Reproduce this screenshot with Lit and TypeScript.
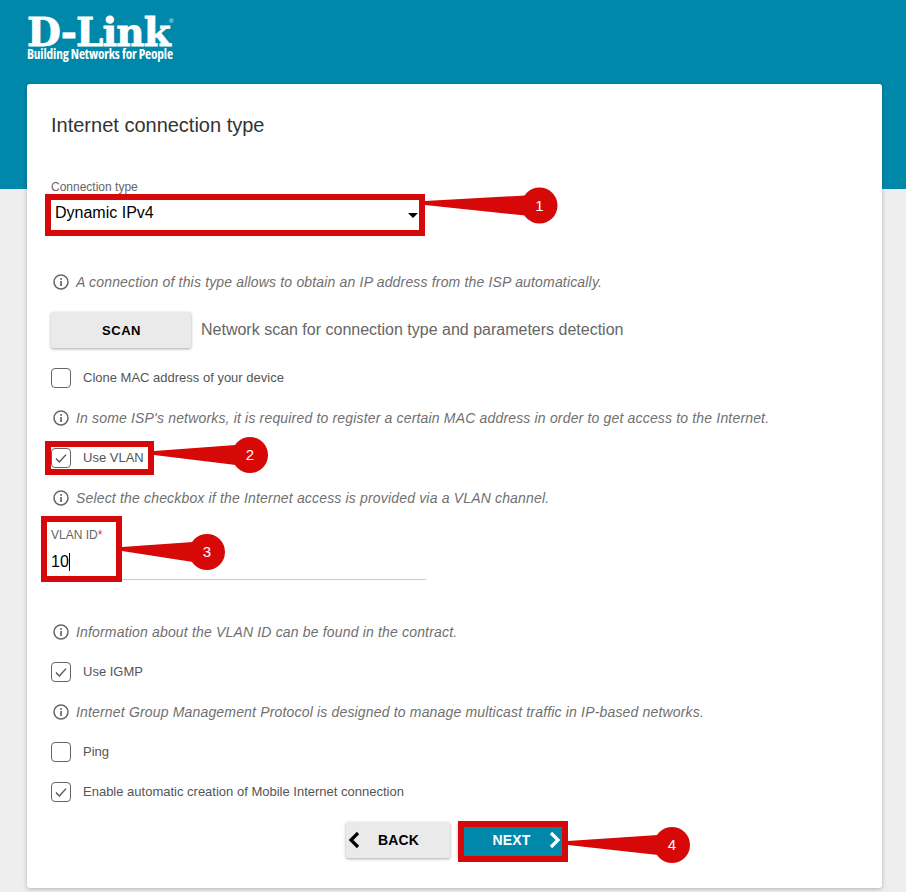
import { LitElement, html, css, svg } from "lit";
import { customElement } from "lit/decorators.js";

const info = html`<svg class="info" viewBox="0 0 16 16" width="16" height="16"><circle cx="8" cy="8" r="7" fill="none" stroke="#666" stroke-width="1.5"/><rect x="7.2" y="7" width="1.7" height="5" fill="#666"/><rect x="7.2" y="4" width="1.7" height="1.8" fill="#666"/></svg>`;

const hint = (t: string, cls = "") => html`<div class="hint ${cls}">${info}<span>${t}</span></div>`;
const check = (t: string, on: boolean, cls = "") => html`<div class="check ${cls}"><span class="box">${on ? html`<svg viewBox="0 0 20 20" width="20" height="20"><path d="M5 10.5l3.4 3.4L15 6.6" fill="none" stroke="#555" stroke-width="1.4"/></svg>` : ""}</span><span class="lbl">${t}</span></div>`;

const callouts: [number, number, number, number, number, number, string, number, number][] = [
  [48, 197, 374, 36, 425, 203, "1", 539.5, 205.5],
  [48, 444, 103, 28, 154, 453, "2", 250, 455],
  [44, 519, 75, 60, 122, 549, "3", 207, 552],
  [461, 824, 104, 35, 568, 843, "4", 672, 845],
];

@customElement("app-root")
export class AppRoot extends LitElement {
  static styles = css`
    :host {
      display: block;
      position: relative;
      width: 906px;
      height: 892px;
      overflow: hidden;
      background: linear-gradient(#0088ab 0 189px, #eeeeee 189px);
      font-family: "Liberation Sans", Arial, sans-serif;
    }
    .logo { height: 84px; box-sizing: border-box; padding: 17px 0 0 27px; color: #fff; }
    .brand { display: flex; align-items: flex-start; font-family: "DejaVu Serif", serif; font-weight: 700; font-size: 39px; line-height: 31px; letter-spacing: -0.9px; height: 31px; -webkit-text-stroke: 0.8px #fff; }
    .reg { font-family: "Liberation Sans", sans-serif; font-size: 6px; line-height: 8px; font-weight: 400; letter-spacing: 0; margin: 0 0 0 -1px; -webkit-text-stroke: 0; }
    .tag { font-family: "Open Sans", sans-serif; font-stretch: condensed; font-weight: 700; font-size: 13.3px; line-height: 13px; letter-spacing: -0.15px; white-space: nowrap; }
    .card {
      box-sizing: border-box;
      width: 855px;
      height: 804px;
      margin-left: 27px;
      padding: 0 24px;
      background: #fff;
      border-radius: 3px;
      box-shadow: 0 1px 4px rgba(0, 0, 0, 0.25);
    }
    h1 { margin: 0; padding-top: 29px; font-size: 20px; line-height: 24px; font-weight: 400; color: #333; height: 67px; }
    .flabel { font-size: 12px; line-height: 14px; color: #666; }
    .select { box-sizing: border-box; display: flex; justify-content: space-between; align-items: center; height: 38px; width: 367px; padding-left: 4px; font-size: 16px; color: #000; }
    .caret { width: 0; height: 0; border-left: 5px solid transparent; border-right: 5px solid transparent; border-top: 5px solid #000; margin-top: 4px; }
    .hint { display: flex; align-items: center; gap: 7px; height: 20px; padding-left: 2px; font-size: 14px; font-style: italic; color: #707070; letter-spacing: 0.17px; }
    .info { flex: none; }
    .mt-a { margin-top: 40px; }
    .mt-b { margin-top: 42px; }
    .scan { display: flex; align-items: center; gap: 10px; margin-top: 20px; font-size: 16px; color: #666; }
    .btn {
      box-sizing: border-box;
      display: flex; align-items: center; justify-content: center;
      position: relative;
      width: 140px; height: 36px; padding-left: 1px; background: #eaeaea; border-radius: 2px;
      box-shadow: 0 1px 3px rgba(0, 0, 0, 0.35);
      font-size: 13px; font-weight: 700; color: #000; letter-spacing: 0.6px;
    }
    .check { display: flex; align-items: center; gap: 12px; height: 20px; color: #555; }
    .box { box-sizing: border-box; width: 20px; height: 20px; border: 1.5px solid #666; border-radius: 4px; display: flex; align-items: center; justify-content: center; }
    .box svg { flex: none; margin: -2px; }
    .lbl { font-size: 13px; padding-bottom: 2px; }
    .m20 { margin-top: 20px; }
    .vlan { margin-top: 20px; width: 375px; height: 51px; border-bottom: 1px solid #ccc; }
    .vlan .flabel span { color: #d33; }
    .val { font-size: 16px; line-height: 20px; color: #000; margin-top: 10px; display: flex; align-items: center; }
    .cursor { width: 1px; height: 18px; background: #000; }
    .actions { display: flex; justify-content: flex-start; gap: 8px; margin: 20px 0 0 295px; }
    .actions .btn { width: 104px; font-size: 14px; letter-spacing: 0.2px; }
    .next.btn { background: #0088ab; color: #fff; padding-left: 3px; }
    .chev { position: absolute; top: 9px; }
    .back .chev { left: 2px; }
    .next .chev { right: 1px; }
    .overlay { position: absolute; inset: 0; pointer-events: none; }
    .overlay text { font-family: "Liberation Sans", Arial, sans-serif; font-size: 15px; fill: #fff; text-anchor: middle; }
  `;

  render() {
    return html`
      <div class="logo">
        <div class="brand"><span>D-Link</span><span class="reg">®</span></div>
        <div class="tag">Building Networks for People</div>
      </div>
      <div class="card">
        <h1>Internet connection type</h1>
        <div class="flabel">Connection type</div>
        <div class="select"><span>Dynamic IPv4</span><span class="caret"></span></div>
        ${hint("A connection of this type allows to obtain an IP address from the ISP automatically.", "mt-a")}
        <div class="scan"><div class="btn">SCAN</div><span>Network scan for connection type and parameters detection</span></div>
        ${check("Clone MAC address of your device", false, "m20")}
        ${hint("In some ISP's networks, it is required to register a certain MAC address in order to get access to the Internet.", "m20")}
        ${check("Use VLAN", true, "m20")}
        ${hint("Select the checkbox if the Internet access is provided via a VLAN channel.", "m20")}
        <div class="vlan">
          <div class="flabel">VLAN ID<span>*</span></div>
          <div class="val">10<span class="cursor"></span></div>
        </div>
        ${hint("Information about the VLAN ID can be found in the contract.", "mt-b")}
        ${check("Use IGMP", true, "m20")}
        ${hint("Internet Group Management Protocol is designed to manage multicast traffic in IP-based networks.", "m20")}
        ${check("Ping", false, "m20")}
        ${check("Enable automatic creation of Mobile Internet connection", true, "m20")}
        <div class="actions">
          <div class="btn back"><svg class="chev" viewBox="0 0 12 18" width="12" height="18"><path d="M10 2L3 9l7 7" fill="none" stroke="#000" stroke-width="3.2"/></svg>BACK</div>
          <div class="btn next">NEXT<svg class="chev" viewBox="0 0 12 18" width="12" height="18"><path d="M2 2l7 7-7 7" fill="none" stroke="#fff" stroke-width="3.2"/></svg></div>
        </div>
      </div>
      <svg class="overlay" width="906" height="892" viewBox="0 0 906 892">
        ${callouts.map(([x, y, w, h, tx, ty, n, cx, cy]) => svg`
          <rect x=${x} y=${y} width=${w} height=${h} fill="none" stroke="#d60808" stroke-width="6"/>
          <polygon points="${tx},${ty - 2} ${cx - 14},${cy - 10} ${cx - 14},${cy + 10} ${tx},${ty + 2}" fill="#d60808"/>
          <circle cx=${cx} cy=${cy} r="18" fill="#d60808"/>
          <text x=${cx} y=${cy + 5}>${n}</text>
        `)}
      </svg>
    `;
  }
}
